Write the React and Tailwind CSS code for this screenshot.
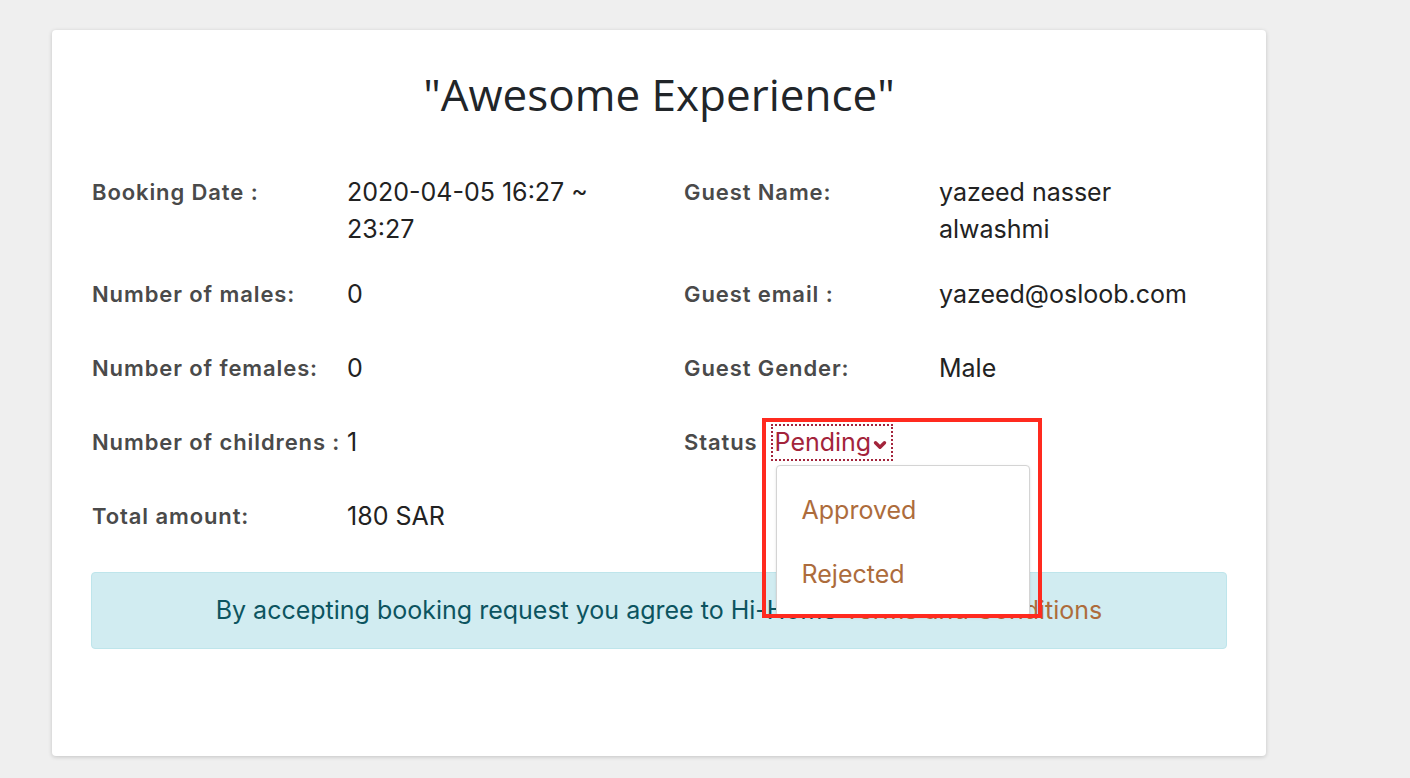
import { ChevronDown } from 'lucide-react';

const leftRows = [
  { label: 'Booking Date :', value: '2020-04-05 16:27 ~ 23:27' },
  { label: 'Number of males:', value: '0' },
  { label: 'Number of females:', value: '0' },
  { label: 'Number of childrens :', value: '1' },
  { label: 'Total amount:', value: '180 SAR' },
];

const rightRows = [
  { label: 'Guest Name:', value: 'yazeed nasser alwashmi' },
  { label: 'Guest email :', value: 'yazeed@osloob.com' },
  { label: 'Guest Gender:', value: 'Male' },
];

function InfoRow({ label, value }) {
  return (
    <div className="flex mb-[28px] min-h-[46px]">
      <div className="w-[255px] shrink-0 pt-[4px] text-[22px] leading-[28px] tracking-[0.9px] font-semibold text-[#4a4a4a]">
        {label}
      </div>
      <div className="w-[256px] text-[25px] leading-[37px] text-[#222]">{value}</div>
    </div>
  );
}

function StatusDropdown() {
  return (
    <div className="relative ml-[13px]">
      <button className="flex items-center border-2 border-dotted border-[#a3243b] px-[2px] h-[37px] text-[25px] text-[#a3243b]">
        Pending
        <ChevronDown className="w-[18px] h-[18px] mt-[4px]" strokeWidth={4.5} />
      </button>
      <div className="absolute left-[5px] top-[41px] w-[254px] h-[152px] bg-white border border-[#d4d4d4] rounded-[4px] shadow-sm z-10 pt-[26px]">
        <div className="px-[25px] text-[25px] leading-[37px] text-[#ad6c3c]">Approved</div>
        <div className="px-[25px] mt-[27px] text-[25px] leading-[37px] text-[#ad6c3c]">Rejected</div>
      </div>
      {/* annotation box */}
      <div className="absolute -left-[9px] -top-[6px] w-[280px] h-[200px] border-[4px] border-[#ff2a1f] z-20 pointer-events-none"></div>
    </div>
  );
}

export default function App() {
  return (
    <div className="min-h-screen bg-[#efefef] pt-[30px] pl-[52px] font-['Inter','Liberation_Sans',sans-serif]">
      <div className="w-[1214px] h-[726px] bg-white rounded-[4px] shadow-[0_1px_4px_rgba(0,0,0,0.18)] px-[39px] pt-[38px]">
        <h1 className="text-center text-[44px] leading-[52px] text-[#212529] font-['Open_Sans',sans-serif]">
          "Awesome Experience"
        </h1>

        <div className="grid grid-cols-[592px_1fr] mt-[54px] pl-[1px]">
          <div>
            {leftRows.map((r) => (
              <InfoRow key={r.label} label={r.label} value={r.value} />
            ))}
          </div>
          <div>
            {rightRows.map((r) => (
              <InfoRow key={r.label} label={r.label} value={r.value} />
            ))}
            <div className="flex mb-[28px] min-h-[46px]">
              <div className="pt-[4px] text-[22px] leading-[28px] tracking-[0.9px] font-semibold text-[#4a4a4a]">Status</div>
              <StatusDropdown />
            </div>
          </div>
        </div>

        <div className="h-[77px] flex items-center justify-center bg-[#d1ecf1] border border-[#bee5eb] rounded-[4px] text-[25px] text-[#0c5460]">
          <span>
            By accepting booking request you agree to Hi-Home{' '}
            <a className="text-[#ad6c3c]">Terms and Conditions</a>
          </span>
        </div>
      </div>
    </div>
  );
}
